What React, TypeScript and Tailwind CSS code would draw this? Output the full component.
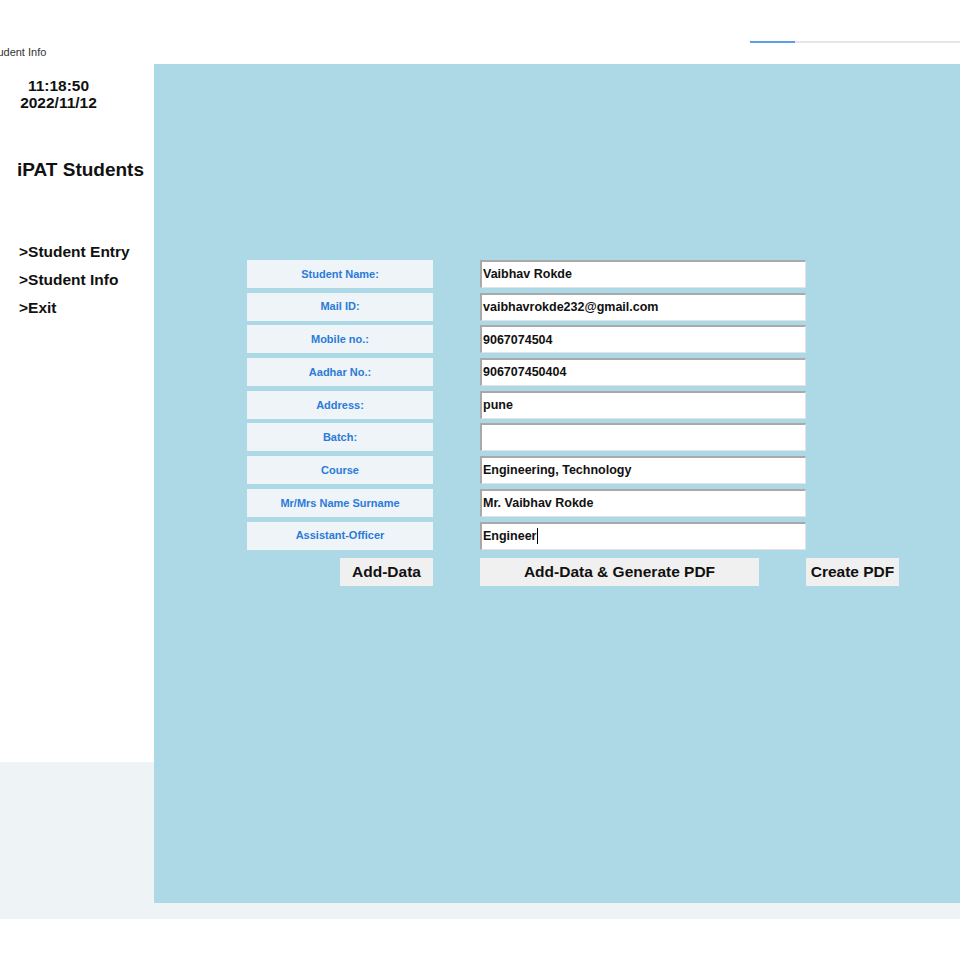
import React from "react";

const rows: { label: string; value: string; cursor?: boolean }[] = [
  { label: "Student Name:", value: "Vaibhav Rokde" },
  { label: "Mail ID:", value: "vaibhavrokde232@gmail.com" },
  { label: "Mobile no.:", value: "9067074504" },
  { label: "Aadhar No.:", value: "906707450404" },
  { label: "Address:", value: "pune" },
  { label: "Batch:", value: "" },
  { label: "Course", value: "Engineering, Technology" },
  { label: "Mr/Mrs Name Surname", value: "Mr. Vaibhav Rokde" },
  { label: "Assistant-Officer", value: "Engineer", cursor: true },
];

export default function App() {
  return (
    <div
      className="w-[960px] h-[960px] bg-white overflow-hidden flex flex-col text-black"
      style={{ fontFamily: '"Liberation Sans", Arial, sans-serif' }}
    >
      {/* title bar */}
      <div className="h-[64px] flex flex-col shrink-0">
        <div className="pt-[41px] flex justify-end">
          <div className="w-[210px] h-[2px] flex">
            <div className="w-[45px] bg-[#5c9fe6]" />
            <div className="flex-1 bg-[#e6e6e6]" />
          </div>
        </div>
        <div className="mt-[2px] -ml-[13px] text-[11px] leading-[14px] text-[#333333]">
          Student Info
        </div>
      </div>

      <div className="flex h-[839px] shrink-0">
        {/* sidebar */}
        <div className="w-[154px] flex flex-col shrink-0">
          <div className="flex-1 bg-white">
            <div className="w-[117px] pt-[13px] text-center text-[15.5px] leading-[17px] font-bold text-[#111]">
              <div>11:18:50</div>
              <div>2022/11/12</div>
            </div>
            <div className="pl-[17px] mt-[48px] text-[19px] leading-[22px] font-bold text-[#111]">
              iPAT Students
            </div>
            <div className="pl-[19px] mt-[57px] flex flex-col text-[15.5px] leading-[28px] font-bold text-[#111]">
              <div>&gt;Student Entry</div>
              <div>&gt;Student Info</div>
              <div>&gt;Exit</div>
            </div>
          </div>
          <div className="h-[141px] bg-[#eef3f6]" />
        </div>

        {/* main panel */}
        <div className="flex-1 bg-[#add8e6] pl-[93px] pt-[196px]">
          <div className="flex flex-col gap-[4.7px]">
            {rows.map((r) => (
              <div key={r.label} className="flex h-[28px]">
                <div className="w-[186px] bg-[#eef4f7] flex items-center justify-center text-[11px] font-bold text-[#2b7bd9]">
                  {r.label}
                </div>
                <div className="ml-[47px] w-[326px] bg-white border-t-2 border-l-2 border-t-[#a9a9a9] border-l-[#a9a9a9] border-b border-r border-b-[#e3e3e3] border-r-[#e3e3e3] flex items-center pl-[1px] text-[12.5px] font-bold text-[#111]">
                  <span>{r.value}</span>
                  {r.cursor && <span className="w-[1.5px] h-[16px] bg-black" />}
                </div>
              </div>
            ))}
          </div>
          <div className="flex mt-[8px] h-[28px]">
            <div className="w-[186px] flex justify-end">
              <div className="w-[93px] bg-[#f0f0f0] flex items-center justify-center text-[15.5px] font-bold text-[#111]">
                Add-Data
              </div>
            </div>
            <div className="ml-[47px] w-[279px] bg-[#f0f0f0] flex items-center justify-center text-[15.5px] font-bold text-[#111]">
              Add-Data &amp; Generate PDF
            </div>
            <div className="ml-[47px] w-[93px] bg-[#f0f0f0] flex items-center justify-center text-[15.5px] font-bold text-[#111]">
              Create PDF
            </div>
          </div>
        </div>
      </div>

      <div className="h-[16px] bg-[#eef3f6] shrink-0" />
      <div className="flex-1 bg-white" />
    </div>
  );
}
